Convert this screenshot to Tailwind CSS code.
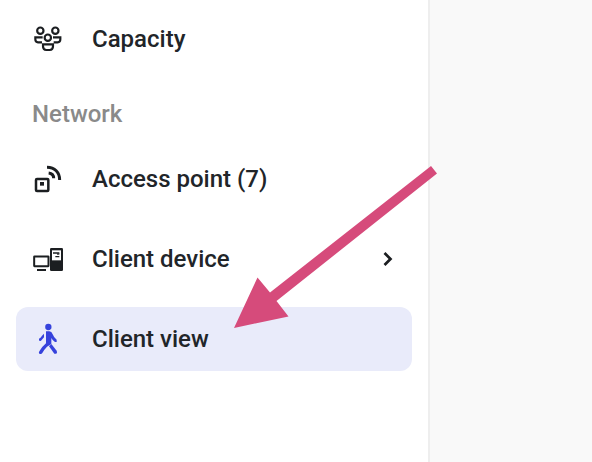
<!DOCTYPE html>
<html lang="en">
<head>
<meta charset="utf-8">
<title>Navigation</title>
<script src="https://cdn.jsdelivr.net/npm/@tailwindcss/browser@4"></script>
</head>
<body class="relative h-[462px] w-[592px] overflow-hidden bg-[#f9f9f9] font-['Roboto',sans-serif] text-2xl font-medium text-[#212529]">
<aside class="h-[462px] w-[430px] border-r-2 border-[#eeeeee] bg-white px-4 pt-[7px]">
  <nav class="flex flex-col">
    <a class="flex h-16 items-center pl-2">
      <svg class="h-[46px] w-[50px]" viewBox="0 0 150 138" fill="none" stroke="#1b1e21" stroke-width="6.500">
        <circle cx="49" cy="44" r="9.500"/><circle cx="94" cy="44" r="9.500"/><circle cx="71.500" cy="65" r="9.500"/>
        <path d="M56 64H34V70Q34 79 42 79H54M87 64H109V70Q109 79 101 79H89"/>
        <path d="M57 85H87V91Q87 102 77 102H67Q57 102 57 91Z"/>
      </svg>
      <span class="ml-[18px]">Capacity</span>
    </a>
    <h2 class="flex h-[76px] items-center pl-4 pt-[10px] text-[#8a8a8a]">Network</h2>
    <a class="flex h-16 items-center pl-2">
      <svg class="h-[46px] w-[50px]" viewBox="0 0 150 138" fill="none" stroke="#1b1e21" stroke-width="7.500">
        <rect x="36" y="69" width="37" height="36" rx="3"/>
        <rect x="48" y="78" width="12" height="11" fill="#1b1e21" stroke="none"/>
        <path d="M69 34C92 34 107 49 107 72" stroke-width="9"/>
        <path d="M74 51C83 52 89 58 89 67" stroke-width="9"/>
      </svg>
      <span class="ml-[18px]">Access point (7)</span>
    </a>
    <a class="mt-4 flex h-16 items-center pl-2">
      <svg class="h-[46px] w-[50px]" viewBox="0 0 150 138" fill="none">
        <rect x="30.500" y="61.500" width="43" height="29" rx="1" stroke="#1b1e21" stroke-width="6"/>
        <path d="M39 99H66V105H39Z" fill="#1b1e21"/>
        <rect x="78" y="36" width="39" height="69" rx="4" fill="#1b1e21"/>
        <path d="M84 43H111V73H84Z" fill="white"/>
        <path d="M87 51H106M94 62H106" stroke="#1b1e21" stroke-width="4"/>
        <path d="M99 52H106V56H99Z" fill="#1b1e21"/>
      </svg>
      <span class="ml-[18px]">Client device</span>
      <svg class="ml-auto mr-[13px] h-5 w-5" viewBox="0 0 20 20" fill="none"><path d="m5.500 4 6 6-6 6" stroke="#1b1e21" stroke-width="2.700"/></svg>
    </a>
    <a class="mt-4 flex h-16 items-center rounded-xl bg-[#e9ebfa] pl-2">
      <svg class="h-[46px] w-[50px]" viewBox="0 0 150 138" fill="#3642dc">
        <circle cx="73" cy="33" r="9.500"/>
        <path d="M66 46H76Q83 46 86 55Q89 64 98 71V78H93Q86 74 82 66V84L69 92Q61 100 55 111Q52 116 46 113Q43 111 46 106Q52 94 66 82Z"/>
        <path d="M60 53V64L51 74Q47 77 45 73V68Q51 65 54 59Z"/>
        <path d="M75 91L82 84L98 104Q101 110 97 113H91Z"/>
      </svg>
      <span class="ml-[18px]">Client view</span>
    </a>
  </nav>
</aside>
<svg class="absolute inset-0 h-[462px] w-[592px]" viewBox="0 0 592 462" fill="#d64b7b"><path d="M431 166L437 173.500L276.500 301L288.500 316.500L234 328L257.500 277.500L270 292.500Z"/></svg>
</body>
</html>
